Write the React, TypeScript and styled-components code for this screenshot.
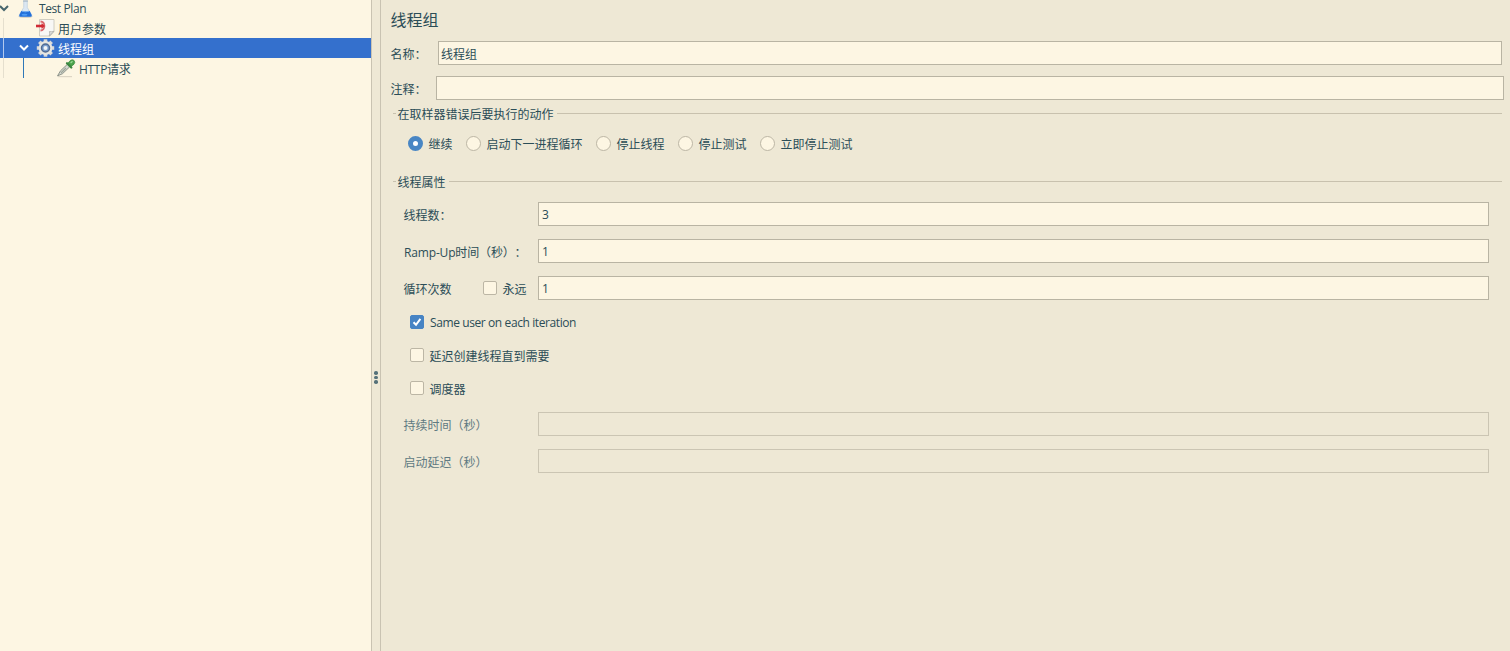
import React from "react";
import styled, { createGlobalStyle } from "styled-components";

const Global = createGlobalStyle`
  * { box-sizing: border-box; }
  body {
    margin: 0;
    overflow: hidden;
    background: #eee8d5;
    color: #2b4d57;
    font-family: "Open Sans", "Noto Sans CJK SC", sans-serif;
    font-size: 12px;
    line-height: 20px;
    text-spacing-trim: space-all;
  }
`;

const Window = styled.div`
  display: flex;
  width: 100vw;
  height: 100vh;
`;

const TreePane = styled.nav`
  width: 371px;
  flex: none;
  overflow: hidden;
  background: #fdf6e3;
`;

const TreeList = styled.div`
  margin-top: -2px;
`;

const TreeRow = styled.div<{ $selected?: boolean }>`
  display: flex;
  height: 20px;
  background: ${(p) => (p.$selected ? "#3470cd" : "transparent")};
  color: ${(p) => (p.$selected ? "#fff" : "inherit")};
`;

const Guide = styled.span<{ $lead: number; $width: number; $color: string }>`
  flex: none;
  width: ${(p) => p.$width}px;
  margin-left: ${(p) => p.$lead}px;
  border-left: 1px solid ${(p) => p.$color};
`;

const Arrow = styled.svg<{ $width: number }>`
  flex: none;
  width: ${(p) => p.$width}px;
  height: 20px;
`;

const NodeIcon = styled.svg`
  flex: none;
  width: 20px;
  height: 20px;
`;

const Text = styled.span<{ $shift?: number; $gap?: number; $tracking?: number; $w?: number; $dim?: boolean }>`
  display: block;
  flex: none;
  width: ${(p) => (p.$w ? `${p.$w}px` : "auto")};
  height: 20px;
  margin-top: ${(p) => p.$shift ?? 0}px;
  margin-left: ${(p) => p.$gap ?? 0}px;
  letter-spacing: ${(p) => p.$tracking ?? 0}px;
  white-space: nowrap;
  color: ${(p) => (p.$dim ? "#5f7a82" : "inherit")};
`;

const Splitter = styled.div`
  display: flex;
  flex: none;
  flex-direction: column;
  align-items: center;
  gap: 1px;
  width: 10px;
  padding-top: 371px;
  border-left: 1px solid #c9c3b2;
  border-right: 1px solid #c9c3b2;
`;

const Grip = styled.i`
  width: 3.6px;
  height: 3.6px;
  border-radius: 50%;
  background: #55717a;
`;

const Editor = styled.main`
  flex: 1;
  min-width: 0;
  padding-left: 10px;
`;

const Title = styled.h1`
  height: 41px;
  margin: 0 0 0 -0.5px;
  font-size: 16px;
  font-weight: 400;
  line-height: 40px;
`;

const FieldRow = styled.div<{ $top?: number; $right: number; $left?: number }>`
  display: flex;
  align-items: center;
  height: 24px;
  margin: ${(p) => p.$top ?? 0}px ${(p) => p.$right}px 0 ${(p) => p.$left ?? 0}px;
`;

const Field = styled.div<{ $disabled?: boolean; $text?: boolean }>`
  flex: 1;
  height: 24px;
  padding-left: ${(p) => (p.$text ? 2 : 3)}px;
  border: 1px solid ${(p) => (p.$disabled ? "#cbc5b3" : "#b9b4a3")};
  background: ${(p) => (p.$disabled ? "transparent" : "#fdf6e3")};
  line-height: ${(p) => (p.$text ? 25 : 23)}px;
`;

const Legend = styled.div<{ $top: number }>`
  display: flex;
  align-items: center;
  gap: 2px;
  height: 13px;
  margin: ${(p) => p.$top}px 8px 0 2px;

  &::before,
  &::after {
    content: "";
    width: 3px;
    height: 1px;
    background: #c8c1ae;
  }

  &::after {
    flex: 1;
    margin-left: 1px;
  }
`;

const RadioRow = styled.div`
  display: flex;
  align-items: center;
  height: 15px;
  margin: 16px 0 0 17px;
`;

const RadioOption = styled.label<{ $w: number }>`
  display: flex;
  flex: none;
  align-items: center;
  gap: 6px;
  width: ${(p) => p.$w}px;
`;

const RadioDot = styled.i<{ $on?: boolean }>`
  flex: none;
  width: 15px;
  height: 15px;
  border: ${(p) => (p.$on ? "5px solid #4986c4" : "1px solid #bcb6a5")};
  border-radius: 50%;
  background: ${(p) => (p.$on ? "#fff" : "#fdf6e3")};
`;

const CheckRow = styled.label<{ $top: number }>`
  display: flex;
  align-items: center;
  gap: 6px;
  height: 14px;
  margin: ${(p) => p.$top}px 0 0 19px;
`;

const Box = styled.span<{ $on?: boolean }>`
  display: flex;
  flex: none;
  width: 14px;
  height: 14px;
  border: 1px solid ${(p) => (p.$on ? "#4784c4" : "#bcb6a5")};
  border-radius: 2px;
  background: ${(p) => (p.$on ? "#4784c4" : "#fdf6e3")};
`;

const Forever = styled.label`
  display: flex;
  flex: none;
  align-items: center;
  gap: 6px;
  width: 55px;
`;

function Check({ on }: { on?: boolean }) {
  return (
    <Box $on={on}>
      {on && (
        <svg width="12" height="12" viewBox="0 0 12 12">
          <path d="M2.5 6.3 5 8.8 9.4 2.8" fill="none" stroke="#fff" strokeWidth="2" />
        </svg>
      )}
    </Box>
  );
}

function Chevron({ x, y, width, color }: { x: number; y: number; width: number; color: string }) {
  return (
    <Arrow $width={width} viewBox={`0 0 ${width} 20`}>
      <path d={`M${x} ${y}l4 4 4-4`} fill="none" stroke={color} strokeWidth="2" />
    </Arrow>
  );
}

function FlaskIcon() {
  return (
    <NodeIcon viewBox="0 0 20 20">
      <ellipse cx="9.5" cy="18.6" rx="7.2" ry="1.2" fill="#d3ccba" />
      <path d="M7.7 3v6.5L3.3 16.8q-.7 1.800 1 1.800h10.400q1.700 0 1-1.800L11.300 9.500V3z" fill="#dbe7f2" stroke="#b5c8da" strokeWidth=".6" />
      <path d="M5.300 13 3.300 17q-.5 1.700 1 1.700h10.400q1.500 0 1-1.700L13.700 13q-4.200 1.200-8.400 0z" fill="#2370da" />
      <path d="M6 13.200q3.500 1.200 7 0" stroke="#73aff5" fill="none" />
      <path d="M7 3h5" stroke="#a8b9c6" strokeWidth="1.200" />
      <ellipse cx="8.500" cy="16.800" rx="3" ry="1" fill="#4b9bf5" />
    </NodeIcon>
  );
}

function ParamsIcon() {
  return (
    <NodeIcon viewBox="0 0 20 20">
      <path d="M3.500 1.500h14.500v12l-4 4.500H3.500z" fill="#f8f7f5" stroke="#cbc7bd" strokeWidth=".9" />
      <path d="M18 13.300q-2.300.7-4.600.2.700 2.500-.2 4.500z" fill="#deddd9" stroke="#aaa8a2" strokeWidth=".7" />
      <path d="M4.500 3.500q3.800.3 3.900 4.500-.1 4.200-3.900 4.500" fill="none" stroke="#d9696f" strokeWidth="1.800" />
      <path d="M0 8h7" stroke="#d12b35" strokeWidth="2.600" />
      <path d="M5.500 5.200 9 8l-3.500 2.800z" fill="#d12b35" />
    </NodeIcon>
  );
}

function GearIcon() {
  return (
    <NodeIcon viewBox="0 0 20 20">
      {[0, 45, 90, 135].map((a) => (
        <path key={a} d="M9.500 1.300v17.400" stroke="#d9dad9" strokeWidth="3.600" transform={`rotate(${a} 9.500 10)`} />
      ))}
      <circle cx="9.500" cy="10" r="6.900" fill="#e6e6e2" />
      <circle cx="9.500" cy="10" r="4" fill="#7ba0d0" stroke="#506a91" strokeWidth="1.500" />
      <circle cx="9.500" cy="10" r="2" fill="#f1f4f7" />
    </NodeIcon>
  );
}

function DropperIcon() {
  return (
    <NodeIcon viewBox="0 0 20 20">
      <path d="M2 18.600h14" stroke="#ddd6c5" strokeWidth="1.200" />
      <path d="M11.400 6.300 4.500 12.800 1.500 17.900l5-2.200 7.200-6.900z" fill="#d5d9d0" stroke="#858b82" strokeWidth=".9" />
      <path d="M10 10 5 15" stroke="#9fa69a" strokeWidth="1.200" />
      <path d="m11.600 5.600 2.600-3q2-1.700 3.800-.2 1.700 1.800 0 3.800l-3.300 2.700z" fill="#4ba34c" stroke="#3b8c42" strokeWidth=".7" />
      <path d="m11 5.200 4.300 4.300" stroke="#3a8641" strokeWidth="2.300" strokeLinecap="round" />
      <path d="m14.600 4.900 1.900-1.700" stroke="#9bd899" strokeWidth="1.300" />
    </NodeIcon>
  );
}

const radioOptions = [
  { label: "继续", width: 58, on: true },
  { label: "启动下一进程循环", width: 130 },
  { label: "停止线程", width: 82 },
  { label: "停止测试", width: 82 },
  { label: "立即停止测试", width: 100 },
];

export default function App() {
  return (
    <Window>
      <Global />
      <TreePane>
        <TreeList>
          <TreeRow>
            <Chevron x={0} y={8} width={16} color="#46656c" />
            <FlaskIcon />
            <Text $gap={3} $shift={1} $tracking={-0.4}>Test Plan</Text>
          </TreeRow>
          <TreeRow>
            <Guide $lead={3} $width={33} $color="#e5dfce" />
            <ParamsIcon />
            <Text $gap={2} $shift={2}>用户参数</Text>
          </TreeRow>
          <TreeRow $selected>
            <Guide $lead={3} $width={13} $color="#b3c9ee" />
            <Chevron x={4} y={7.5} width={20} color="#fff" />
            <GearIcon />
            <Text $gap={2} $shift={2}>线程组</Text>
          </TreeRow>
          <TreeRow>
            <Guide $lead={3} $width={20} $color="#e5dfce" />
            <Guide $lead={0} $width={33} $color="#2f78b8" />
            <DropperIcon />
            <Text $gap={3} $shift={2} $tracking={-0.3}>HTTP请求</Text>
          </TreeRow>
        </TreeList>
      </TreePane>
      <Splitter>
        <Grip />
        <Grip />
        <Grip />
      </Splitter>
      <Editor>
        <Title>线程组</Title>
        <FieldRow $right={8}>
          <Text $w={47.5} $gap={-0.5} $shift={4}>名称：</Text>
          <Field $text>线程组</Field>
        </FieldRow>
        <FieldRow $top={11} $right={6}>
          <Text $w={45.5} $gap={-0.5} $shift={4}>注释：</Text>
          <Field />
        </FieldRow>
        <Legend $top={7}>
          <Text $gap={-0.5} $shift={3}>在取样器错误后要执行的动作</Text>
        </Legend>
        <RadioRow>
          {radioOptions.map((o) => (
            <RadioOption key={o.label} $w={o.width}>
              <RadioDot $on={o.on} />
              <Text $gap={-0.5} $shift={3}>{o.label}</Text>
            </RadioOption>
          ))}
        </RadioRow>
        <Legend $top={24}>
          <Text $gap={-0.5} $shift={3}>线程属性</Text>
        </Legend>
        <FieldRow $top={14} $left={13} $right={21}>
          <Text $w={134.5} $gap={-0.5} $shift={4}>线程数：</Text>
          <Field>3</Field>
        </FieldRow>
        <FieldRow $top={13} $left={13} $right={21}>
          <Text $w={134} $shift={4} $tracking={-0.16}>Ramp-Up时间（秒）：</Text>
          <Field>1</Field>
        </FieldRow>
        <FieldRow $top={13} $left={13} $right={21}>
          <Text $w={79.5} $gap={-0.5} $shift={4}>循环次数</Text>
          <Forever>
            <Check />
            <Text $gap={-0.5} $shift={4}>永远</Text>
          </Forever>
          <Field>1</Field>
        </FieldRow>
        <CheckRow $top={15}>
          <Check on />
          <Text $shift={2} $tracking={-0.4}>Same user on each iteration</Text>
        </CheckRow>
        <CheckRow $top={19}>
          <Check />
          <Text $gap={-0.5} $shift={4}>延迟创建线程直到需要</Text>
        </CheckRow>
        <CheckRow $top={19}>
          <Check />
          <Text $gap={-0.5} $shift={4}>调度器</Text>
        </CheckRow>
        <FieldRow $top={17} $left={13} $right={21}>
          <Text $w={134.5} $gap={-0.5} $shift={4} $dim>持续时间（秒）</Text>
          <Field $disabled />
        </FieldRow>
        <FieldRow $top={13} $left={13} $right={21}>
          <Text $w={134.5} $gap={-0.5} $shift={4} $dim>启动延迟（秒）</Text>
          <Field $disabled />
        </FieldRow>
      </Editor>
    </Window>
  );
}
